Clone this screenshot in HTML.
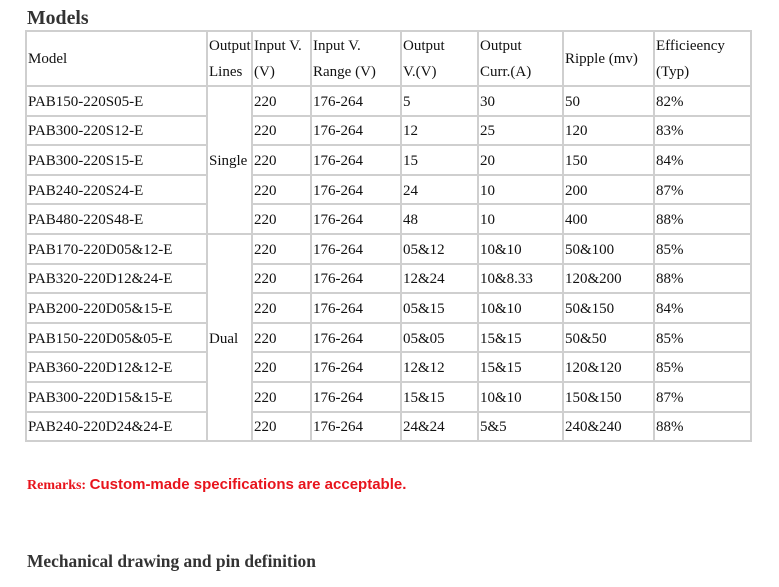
<!DOCTYPE html>
<html><head><style>
body{margin:0;width:779px;height:587px;background:#fff;position:relative;font-family:"Liberation Serif",serif;color:#111;overflow:hidden}
h1{position:absolute;left:27px;top:7px;margin:0;font-size:19.8px;font-weight:bold;color:#333}
table{position:absolute;left:25px;top:30px;border-collapse:collapse;table-layout:fixed;font-size:15px}
td{border:2px solid #cfcfcf;padding:3px 0 0 1px;vertical-align:middle;height:24.6px;line-height:17px;white-space:nowrap;overflow:hidden}
tr.h td{height:48px;line-height:26px;padding-top:1px}
.rm{position:absolute;left:27px;top:476px;color:#e8141c;font-weight:bold;font-size:14px}
.rm .s{font-family:"Liberation Sans",sans-serif;font-size:15px}
h2{position:absolute;left:27px;top:551px;margin:0;font-size:17.4px;font-weight:bold;color:#333}
</style></head><body>
<h1>Models</h1>
<table>
<colgroup><col style="width:181px"><col style="width:45px"><col style="width:59px"><col style="width:90px"><col style="width:77px"><col style="width:85px"><col style="width:91px"><col style="width:97px"></colgroup>
<tr class="h"><td>Model</td><td>Output<br>Lines</td><td>Input V.<br>(V)</td><td>Input V.<br>Range (V)</td><td>Output<br>V.(V)</td><td>Output<br>Curr.(A)</td><td>Ripple (mv)</td><td>Efficieency<br>(Typ)</td></tr>
<tr><td>PAB150-220S05-E</td><td rowspan="5">Single</td><td>220</td><td>176-264</td><td>5</td><td>30</td><td>50</td><td>82%</td></tr>
<tr><td>PAB300-220S12-E</td><td>220</td><td>176-264</td><td>12</td><td>25</td><td>120</td><td>83%</td></tr>
<tr><td>PAB300-220S15-E</td><td>220</td><td>176-264</td><td>15</td><td>20</td><td>150</td><td>84%</td></tr>
<tr><td>PAB240-220S24-E</td><td>220</td><td>176-264</td><td>24</td><td>10</td><td>200</td><td>87%</td></tr>
<tr><td>PAB480-220S48-E</td><td>220</td><td>176-264</td><td>48</td><td>10</td><td>400</td><td>88%</td></tr>
<tr><td>PAB170-220D05&amp;12-E</td><td rowspan="7">Dual</td><td>220</td><td>176-264</td><td>05&amp;12</td><td>10&amp;10</td><td>50&amp;100</td><td>85%</td></tr>
<tr><td>PAB320-220D12&amp;24-E</td><td>220</td><td>176-264</td><td>12&amp;24</td><td>10&amp;8.33</td><td>120&amp;200</td><td>88%</td></tr>
<tr><td>PAB200-220D05&amp;15-E</td><td>220</td><td>176-264</td><td>05&amp;15</td><td>10&amp;10</td><td>50&amp;150</td><td>84%</td></tr>
<tr><td>PAB150-220D05&amp;05-E</td><td>220</td><td>176-264</td><td>05&amp;05</td><td>15&amp;15</td><td>50&amp;50</td><td>85%</td></tr>
<tr><td>PAB360-220D12&amp;12-E</td><td>220</td><td>176-264</td><td>12&amp;12</td><td>15&amp;15</td><td>120&amp;120</td><td>85%</td></tr>
<tr><td>PAB300-220D15&amp;15-E</td><td>220</td><td>176-264</td><td>15&amp;15</td><td>10&amp;10</td><td>150&amp;150</td><td>87%</td></tr>
<tr><td>PAB240-220D24&amp;24-E</td><td>220</td><td>176-264</td><td>24&amp;24</td><td>5&amp;5</td><td>240&amp;240</td><td>88%</td></tr>
</table>
<div class="rm">Remarks: <span class="s">Custom-made specifications are acceptable.</span></div>
<h2>Mechanical drawing and pin definition</h2>
</body></html>
